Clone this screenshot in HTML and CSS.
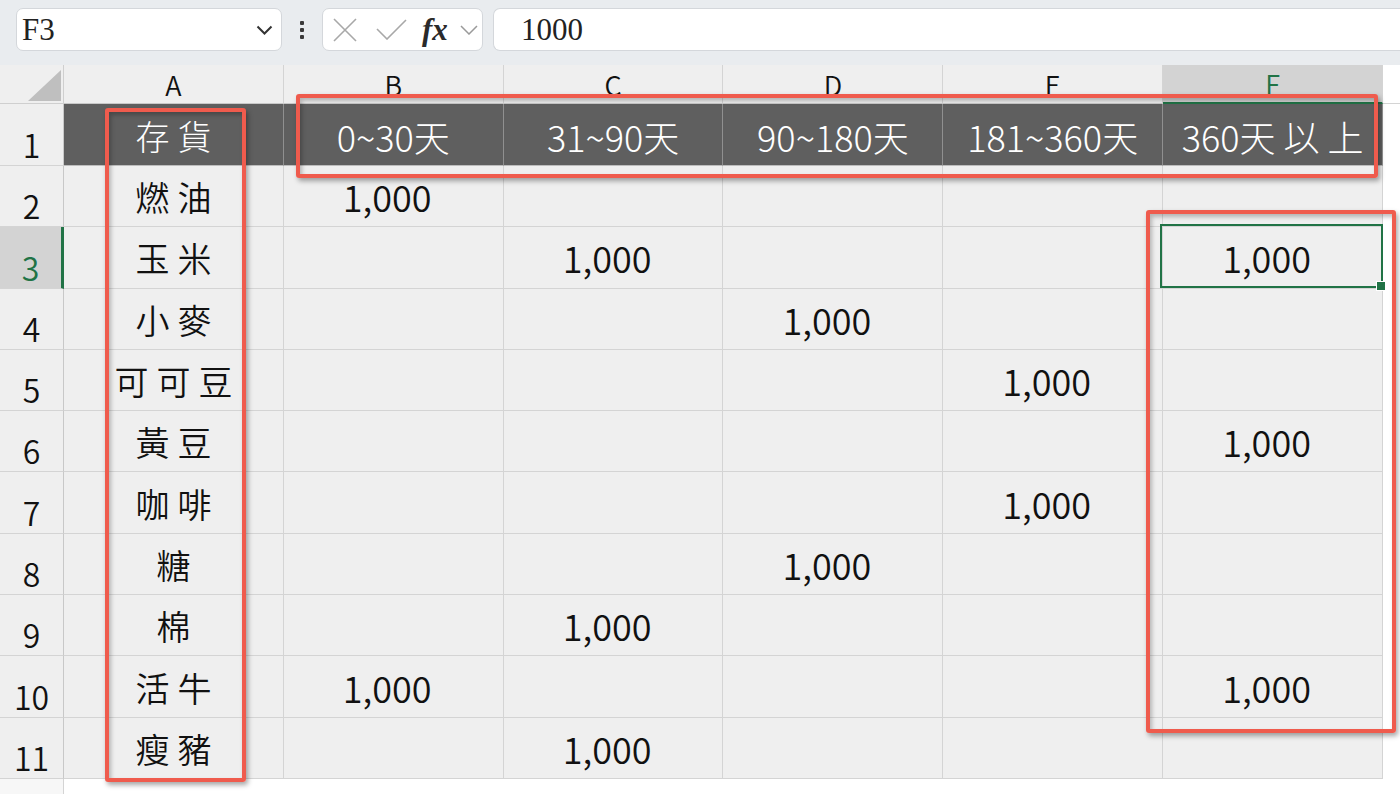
FILE: index.html
```html
<!DOCTYPE html>
<html lang="zh-Hant">
<head>
<meta charset="utf-8">
<title>Sheet</title>
<link rel="stylesheet" href="styles.css">
</head>
<body>
<div class="topbar">
  <div class="namebox">
    <span class="ref">F3</span>
    <svg class="chev" width="17" height="10" viewBox="0 0 17 10"><path d="M1.5 1.5 L8.5 8.5 L15.5 1.5" fill="none" stroke="#333" stroke-width="2"/></svg>
  </div>
  <div class="dots"><i></i><i></i><i></i></div>
  <div class="fxbox">
    <svg class="ic-x" width="24" height="24" viewBox="0 0 24 24"><path d="M1 1 L23 23 M23 1 L1 23" stroke="#a8a8a8" stroke-width="1.6" fill="none"/></svg>
    <svg class="ic-ok" width="31" height="21" viewBox="0 0 31 21"><path d="M1 10 L11 20 L30 1" stroke="#a8a8a8" stroke-width="1.6" fill="none"/></svg>
    <span class="fx">fx</span>
    <svg class="ic-dd" width="18" height="10" viewBox="0 0 18 10"><path d="M1 1 L9 9 L17 1" stroke="#9a9a9a" stroke-width="1.5" fill="none"/></svg>
  </div>
  <div class="formula">1000</div>
</div>

<div class="sheet">
  <div class="row colhead">
    <div class="corner"><svg width="33" height="31" viewBox="0 0 33 31"><path d="M33 0 L33 31 L0 31 Z" fill="#bfbfbf"/></svg></div>
    <div class="ch">A</div><div class="ch">B</div><div class="ch">C</div><div class="ch">D</div><div class="ch">E</div><div class="ch sel">F</div><div class="fill"></div>
  </div>
  <div class="row r1">
    <div class="rh">1</div>
    <div class="c hd cj">存貨</div><div class="c hd">0~30天</div><div class="c hd">31~90天</div><div class="c hd">90~180天</div><div class="c hd">181~360天</div><div class="c hd">360天 以 上</div><div class="fill"></div>
  </div>
  <div class="row r">
    <div class="rh">2</div>
    <div class="c cj">燃油</div><div class="c num">1,000</div><div class="c"></div><div class="c"></div><div class="c"></div><div class="c"></div><div class="fill"></div>
  </div>
  <div class="row r">
    <div class="rh rsel">3</div>
    <div class="c cj">玉米</div><div class="c"></div><div class="c num">1,000</div><div class="c"></div><div class="c"></div><div class="c num active">1,000</div><div class="fill"></div>
  </div>
  <div class="row r">
    <div class="rh">4</div>
    <div class="c cj">小麥</div><div class="c"></div><div class="c"></div><div class="c num">1,000</div><div class="c"></div><div class="c"></div><div class="fill"></div>
  </div>
  <div class="row r">
    <div class="rh">5</div>
    <div class="c cj">可可豆</div><div class="c"></div><div class="c"></div><div class="c"></div><div class="c num">1,000</div><div class="c"></div><div class="fill"></div>
  </div>
  <div class="row r">
    <div class="rh">6</div>
    <div class="c cj">黃豆</div><div class="c"></div><div class="c"></div><div class="c"></div><div class="c"></div><div class="c num">1,000</div><div class="fill"></div>
  </div>
  <div class="row r">
    <div class="rh">7</div>
    <div class="c cj">咖啡</div><div class="c"></div><div class="c"></div><div class="c"></div><div class="c num">1,000</div><div class="c"></div><div class="fill"></div>
  </div>
  <div class="row r">
    <div class="rh">8</div>
    <div class="c cj">糖</div><div class="c"></div><div class="c"></div><div class="c num">1,000</div><div class="c"></div><div class="c"></div><div class="fill"></div>
  </div>
  <div class="row r">
    <div class="rh">9</div>
    <div class="c cj">棉</div><div class="c"></div><div class="c num">1,000</div><div class="c"></div><div class="c"></div><div class="c"></div><div class="fill"></div>
  </div>
  <div class="row r">
    <div class="rh">10</div>
    <div class="c cj">活牛</div><div class="c num">1,000</div><div class="c"></div><div class="c"></div><div class="c"></div><div class="c num">1,000</div><div class="fill"></div>
  </div>
  <div class="row r">
    <div class="rh">11</div>
    <div class="c cj">瘦豬</div><div class="c"></div><div class="c num">1,000</div><div class="c"></div><div class="c"></div><div class="c"></div><div class="fill"></div>
  </div>
  <div class="row tail">
    <div class="rh-empty"></div>
  </div>
</div>

<div class="redbox rb1"></div>
<div class="redbox rb2"></div>
<div class="redbox rb3"></div>
</body>
</html>
```

FILE: styles.css
```css
* { box-sizing: border-box; }

body {
  margin: 0;
  width: 1400px;
  height: 794px;
  overflow: hidden;
  background: #ffffff;
  position: relative;
  font-family: "Noto Sans CJK TC", "Noto Sans", sans-serif;
  color: #111;
}

/* ---------- formula bar ---------- */
.topbar {
  height: 65px;
  background: #e9ecef;
  display: flex;
  align-items: flex-start;
  padding-top: 8px;
}

.namebox {
  margin-left: 16px;
  width: 266px;
  height: 43px;
  background: #fff;
  border: 1px solid #d4d7db;
  border-radius: 7px;
  display: flex;
  align-items: center;
  justify-content: space-between;
  padding: 0 8px 0 5px;
}

.ref {
  font-family: "Liberation Serif", serif;
  font-size: 31px;
  color: #222;
  line-height: 1;
}

.dots {
  width: 40px;
  height: 43px;
  display: flex;
  flex-direction: column;
  align-items: center;
  gap: 3px;
  padding-top: 13px;
}

.dots i {
  width: 4px;
  height: 4px;
  background: #3a3a3a;
  border-radius: 1px;
}

.fxbox {
  width: 161px;
  height: 43px;
  background: #fff;
  border: 1px solid #d4d7db;
  border-radius: 7px;
  display: flex;
  align-items: center;
  padding-left: 10px;
}

.ic-ok { margin-left: 19px; }

.fx {
  margin-left: 15px;
  font-family: "Liberation Serif", serif;
  font-style: italic;
  font-weight: bold;
  font-size: 31px;
  line-height: 1;
  color: #2a2a2a;
  width: 30px;
}

.ic-dd { margin-left: 8px; }

.formula {
  margin-left: 10px;
  flex: 1;
  height: 43px;
  background: #fff;
  border: 1px solid #d4d7db;
  border-right: none;
  border-radius: 7px 0 0 7px;
  padding-left: 27px;
  display: flex;
  align-items: center;
  font-family: "Liberation Serif", serif;
  font-size: 31px;
  color: #222;
}

/* ---------- grid ---------- */
.row {
  display: grid;
  grid-template-columns: 64px repeat(6, 219.83px) 1fr;
}

.colhead { height: 39px; }
.r1 { height: 62px; }
.r { height: 61.3px; }
.tail { height: 20px; }

.corner {
  background: #efefef;
  border-right: 1px solid #cfcfcf;
  border-bottom: 1px solid #cfcfcf;
  display: flex;
  align-items: flex-start;
  justify-content: flex-end;
  padding: 5px 2px 0 0;
}

.ch {
  background: #efefef;
  border-right: 1px solid #d4d4d4;
  border-bottom: 1px solid #c8c8c8;
  display: flex;
  align-items: flex-end;
  justify-content: center;
  font-size: 27px;
  font-weight: 350;
  line-height: 1;
  padding-bottom: 5px;
  color: #111;
}

.ch.sel {
  background: #d3d3d3;
  color: #217346;
  border-bottom: 2px solid #217346;
}

.colhead .fill {
  background: #fff;
  border-bottom: 1px solid #d4d4d4;
}

.rh {
  background: #efefef;
  border-right: 1px solid #c8c8c8;
  border-bottom: 1px solid #d4d4d4;
  display: flex;
  align-items: flex-end;
  justify-content: center;
  font-size: 32px;
  font-weight: 350;
  line-height: 1;
  padding-bottom: 5px;
  color: #111;
}

.rh.rsel {
  background: #d3d3d3;
  color: #217346;
  border-right: 3px solid #217346;
}

.rh-empty {
  border-right: 1px solid #d4d4d4;
  background: #f7f7f7;
}

.c {
  background: #efefef;
  border-right: 1px solid #d4d4d4;
  border-bottom: 1px solid #d4d4d4;
  display: flex;
  align-items: center;
  justify-content: center;
  line-height: 1;
  padding-top: 0;
  white-space: nowrap;
  font-weight: 350;
}

.hd {
  background: #5f5f5f;
  color: #ffffff;
  border-right-color: #909090;
  border-bottom-color: #bdbdbd;
  font-size: 36px;
  font-weight: 300;
  padding-top: 3px;
}

.cj {
  font-size: 34px;
  letter-spacing: 8px;
  padding-left: 8px;
  padding-top: 2px;
}

.hd.cj { font-size: 34px; }

.num {
  font-size: 36px;
  padding-right: 12px;
}

.active { position: relative; }

.active::after {
  content: "";
  position: absolute;
  left: -3px;
  top: -3px;
  right: -1px;
  bottom: 0;
  border: 2px solid #217346;
}

.active::before {
  content: "";
  position: absolute;
  right: -4px;
  bottom: -3px;
  width: 8px;
  height: 8px;
  background: #217346;
  border: 1px solid #fff;
  z-index: 2;
}

/* ---------- annotation boxes ---------- */
.redbox {
  position: absolute;
  border: 4px solid #ef5b4d;
  border-radius: 3px;
  box-shadow: 2px 3px 5px rgba(0, 0, 0, 0.35), inset 2px 3px 4px rgba(0, 0, 0, 0.25);
}

.rb1 { left: 105px; top: 108px; width: 141px; height: 674px; }
.rb2 { left: 296px; top: 94px; width: 1082px; height: 84px; }
.rb3 { left: 1146px; top: 210px; width: 250px; height: 523px; }
```
